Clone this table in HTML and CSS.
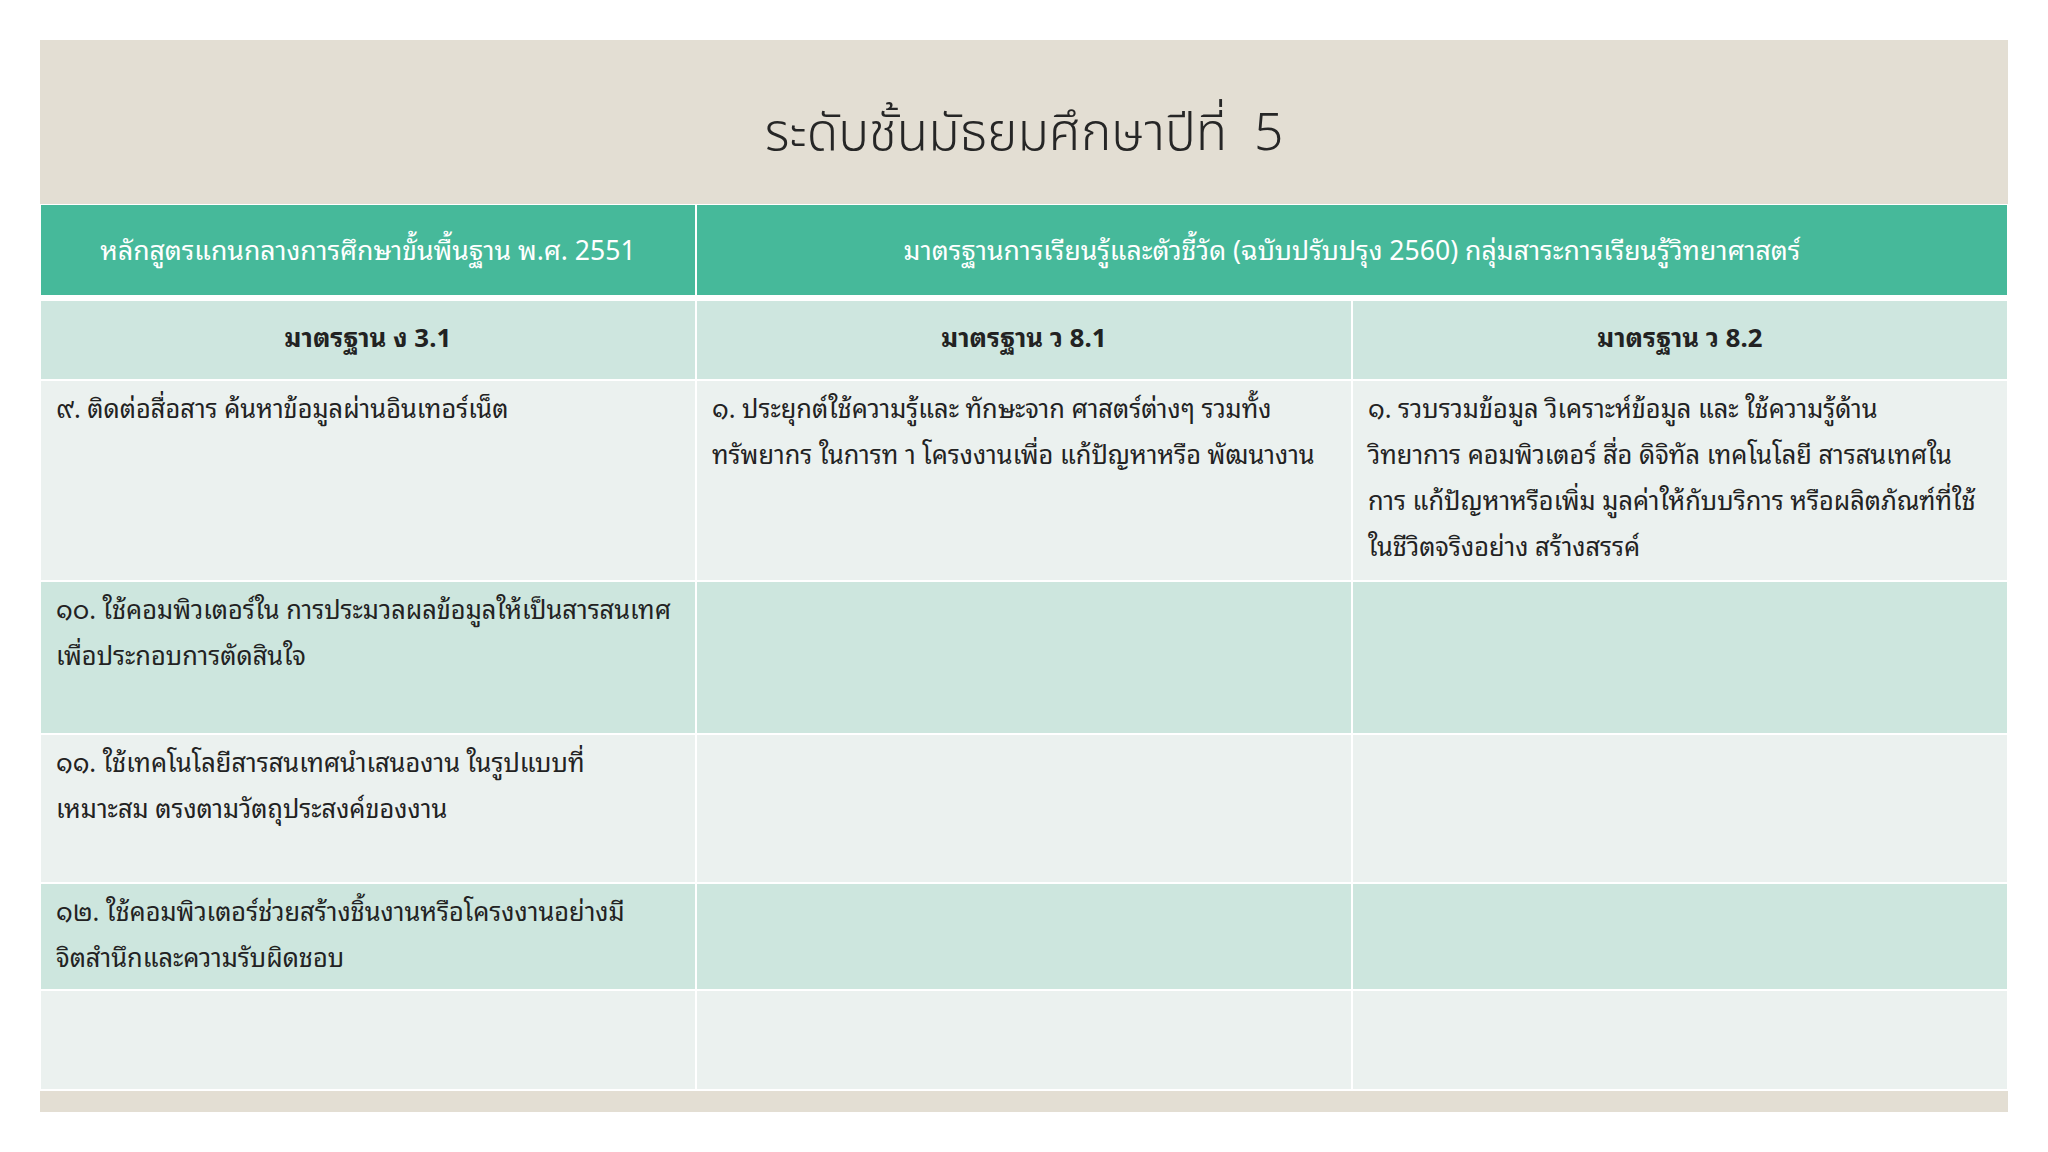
FILE: index.html
```html
<!DOCTYPE html>
<html lang="th">
<head>
<meta charset="utf-8">
<title>ระดับชั้นมัธยมศึกษาปีที่ 5</title>
<link rel="stylesheet" href="styles.css">
</head>
<body>
<div class="slide">
  <div class="title-band">
    <h1 class="title">ระดับชั้นมัธยมศึกษาปีที่&nbsp; 5</h1>
  </div>
  <div class="grid head">
    <div class="cell h">หลักสูตรแกนกลางการศึกษาขั้นพื้นฐาน พ.ศ. 2551</div>
    <div class="cell h span2">มาตรฐานการเรียนรู้และตัวชี้วัด (ฉบับปรับปรุง 2560) กลุ่มสาระการเรียนรู้วิทยาศาสตร์</div>
  </div>
  <div class="grid body">
    <div class="cell sub">มาตรฐาน ง 3.1</div>
    <div class="cell sub">มาตรฐาน ว 8.1</div>
    <div class="cell sub">มาตรฐาน ว 8.2</div>

    <div class="cell light">๙. ติดต่อสื่อสาร ค้นหาข้อมูลผ่านอินเทอร์เน็ต</div>
    <div class="cell light">๑. ประยุกต์ใช้ความรู้และ ทักษะจาก ศาสตร์ต่างๆ รวมทั้ง<br>ทรัพยากร ในการท า โครงงานเพื่อ แก้ปัญหาหรือ พัฒนางาน</div>
    <div class="cell light">๑. รวบรวมข้อมูล วิเคราะห์ข้อมูล และ ใช้ความรู้ด้าน<br>วิทยาการ คอมพิวเตอร์ สื่อ ดิจิทัล เทคโนโลยี สารสนเทศใน<br>การ แก้ปัญหาหรือเพิ่ม มูลค่าให้กับบริการ หรือผลิตภัณฑ์ที่ใช้<br>ในชีวิตจริงอย่าง สร้างสรรค์</div>

    <div class="cell mint">๑๐. ใช้คอมพิวเตอร์ใน การประมวลผลข้อมูลให้เป็นสารสนเทศ<br>เพื่อประกอบการตัดสินใจ</div>
    <div class="cell mint"></div>
    <div class="cell mint"></div>

    <div class="cell light">๑๑. ใช้เทคโนโลยีสารสนเทศนำเสนองาน ในรูปแบบที่<br>เหมาะสม ตรงตามวัตถุประสงค์ของงาน</div>
    <div class="cell light"></div>
    <div class="cell light"></div>

    <div class="cell mint">๑๒. ใช้คอมพิวเตอร์ช่วยสร้างชิ้นงานหรือโครงงานอย่างมี<br>จิตสำนึกและความรับผิดชอบ</div>
    <div class="cell mint"></div>
    <div class="cell mint"></div>

    <div class="cell light"></div>
    <div class="cell light"></div>
    <div class="cell light"></div>
  </div>
  <div class="foot-band"></div>
</div>
</body>
</html>
```

FILE: styles.css
```css
html, body {
  margin: 0;
  padding: 0;
  background: #ffffff;
}
body {
  width: 2048px;
  height: 1152px;
  overflow: hidden;
  font-family: "Noto Sans Thai Looped", "Noto Sans Thai", "Noto Sans", "DejaVu Sans", sans-serif;
  color: #222222;
}
.slide {
  padding: 40px 0 0 40px;
  width: 1968px;
}
.title-band {
  height: 164px;
  background: #e3ded3;
  display: flex;
  align-items: center;
  justify-content: center;
  margin-bottom: 1px;
}
.title {
  margin: 23px 0 0 0;
  font-family: "Noto Sans Thai", "Noto Sans", sans-serif;
  font-weight: 300;
  font-size: 51.5px;
  color: #262626;
  letter-spacing: 0;
}
.grid {
  display: grid;
  grid-template-columns: 654px 654px 654px;
  column-gap: 2px;
  row-gap: 2px;
  margin-left: 1px;
  width: 1966px;
}
.head {
  grid-template-rows: 90px;
  margin-bottom: 6px;
}
.body {
  grid-template-rows: 78px 199px 151px 147px 105px 98px;
}
.cell {
  box-sizing: border-box;
  font-size: 25.4px;
  line-height: 46px;
  padding: 3px 14px 0 15px;
  white-space: nowrap;
  overflow: hidden;
}
.h {
  background: #46b99a;
  color: #ffffff;
  display: flex;
  align-items: center;
  justify-content: center;
  font-size: 26.6px;
  padding: 0 0 4px 0;
}
.span2 {
  grid-column: span 2;
}
.sub {
  background: #cee6df;
  font-weight: 700;
  font-size: 25.8px;
  display: flex;
  align-items: center;
  justify-content: center;
  padding: 0 0 8px 0;
}
.light {
  background: #ebf1ef;
}
.mint {
  background: #cde6de;
}
.foot-band {
  margin-top: 2px;
  height: 21px;
  background: #e3ded3;
}
```
